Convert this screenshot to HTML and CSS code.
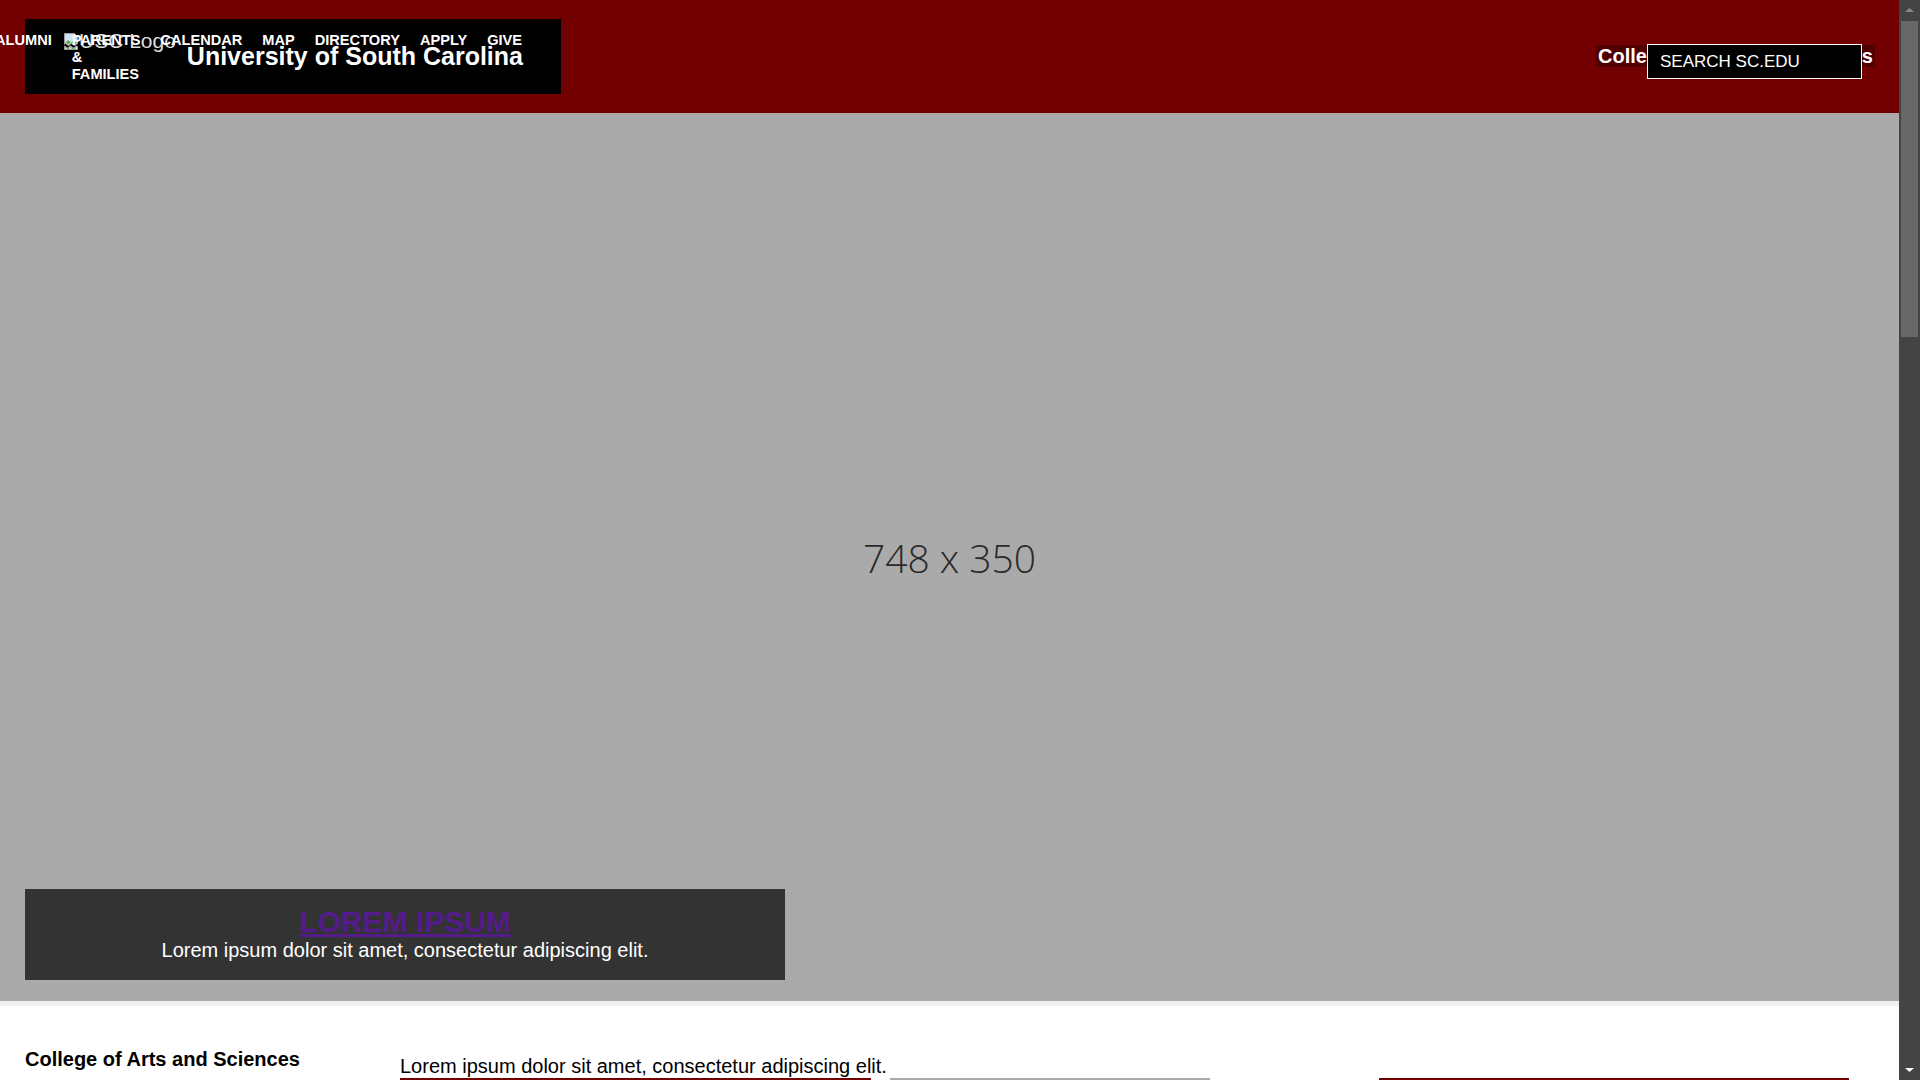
FILE: index.html
```html
<!DOCTYPE html>
<html lang="en">
<head>
<meta charset="utf-8">
<title>College of Arts and Sciences - University of South Carolina</title>
<link rel="stylesheet" href="styles.css">
</head>
<body>
<div class="page">
<header class="site-header">
  <div class="brand">
    <span class="logo">
      <svg class="broken" width="16" height="18" viewBox="0 0 16 18" aria-hidden="true">
        <path d="M1.5 1.5h10l3 3v7l-3 2-3-2-3 2-3-2-1 .8z" fill="#f4f4f4" stroke="#9a9a9a"/>
        <path d="M2 2h9v3h3v6l-2.5 1.6-3-2-3 2-3-2L2 11z" fill="#cfe3f4"/>
        <path d="M2 11l3-3 3 2.5 3-2.5 3 3-2.5 1.6-3-2-3 2-3-2z" fill="#5fae4a"/>
        <path d="M1.5 14l3 2 3-2 3 2 3-2 1 .7v2.8h-13z" fill="#f4f4f4" stroke="#9a9a9a"/>
        <path d="M2.5 15.5l2.5 1.5 2.5-1.5 3 1.5 2.5-1.5" fill="none" stroke="#5fae4a"/>
      </svg>
      <span class="logo-alt">USC Logo</span>
    </span>
    <h1 class="univ">University of South Carolina</h1>
  </div>
  <nav class="top-nav">
    <ul class="top-nav-list">
      <li class="top-nav-item">Alumni</li>
      <li class="top-nav-item wrap">Parents &amp; Families</li>
      <li class="top-nav-item">Calendar</li>
      <li class="top-nav-item">Map</li>
      <li class="top-nav-item">Directory</li>
      <li class="top-nav-item">Apply</li>
      <li class="top-nav-item">Give</li>
    </ul>
  </nav>
  <h2 class="college-title"><span class="college-title-text">College of Arts and Sciences</span></h2>
  <input class="search" type="text" placeholder="SEARCH SC.EDU" aria-label="Search sc.edu">
</header>

<section class="hero">
  <div class="hero-placeholder">748 x 350</div>
  <div class="hero-caption">
    <h2 class="hero-caption-title"><a class="hero-link" href="#">LOREM IPSUM</a></h2>
    <p class="hero-caption-text">Lorem ipsum dolor sit amet, consectetur adipiscing elit.</p>
  </div>
</section>

<main class="content">
  <aside class="sidebar">
    <h2 class="sidebar-title">College of Arts and Sciences</h2>
  </aside>
  <div class="news">
    <div class="news-item first"><span class="news-text">Lorem ipsum dolor sit amet, consectetur adipiscing elit.</span></div>
    <div class="news-item gray"></div>
    <div class="news-item last"></div>
  </div>
</main>

<footer class="site-footer"></footer>
</div>

<div class="scrollbar" aria-hidden="true">
  <svg class="scroll-arrow" width="21" height="17" viewBox="0 0 21 17"><path d="M6 12L10.5 8 15 12z" fill="#8a8a8a"/></svg>
  <div class="scroll-track"><div class="scroll-thumb"></div></div>
  <svg class="scroll-arrow" width="21" height="17" viewBox="0 0 21 17"><path d="M6 5L10.5 9 15 5z" fill="#ffffff"/></svg>
</div>
</body>
</html>
```

FILE: styles.css
```css
html {
  background: #ffffff;
  overflow: hidden;
}

body {
  margin: 0;
  font-family: "Liberation Sans", Arial, sans-serif;
  font-size: 20px;
  color: #000;
}

.page {
  margin-right: 21px;
}

/* Window scrollbar */
.scrollbar {
  position: fixed;
  top: 0;
  right: 0;
  width: 21px;
  height: 100vh;
  background: #444444;
  display: flex;
  flex-direction: column;
}

.scroll-arrow {
  display: block;
  flex: none;
}

.scroll-track {
  flex: 1;
  padding: 4px 2px 0;
}

.scroll-thumb {
  height: 316px;
  background: #686868;
}

/* Header */
.site-header {
  position: relative;
  height: 113px;
  background: #730000;
  display: flex;
  align-items: center;
  justify-content: space-between;
  padding: 0 24px 0 25px;
  box-sizing: border-box;
  color: #fff;
}

.brand {
  width: 536px;
  height: 75px;
  box-sizing: border-box;
  background: #000;
  display: flex;
  align-items: center;
  padding: 0 38px;
}

.logo {
  align-self: flex-start;
  margin-top: 10px;
  display: inline-flex;
  align-items: flex-start;
  font-size: 21px;
  color: #dddddd;
}

.broken {
  margin-top: 3px;
  flex: none;
}

.logo-alt {
  line-height: 24px;
}

.univ {
  margin: 0 0 1px auto;
  font-size: 25px;
  font-weight: bold;
  white-space: nowrap;
}

.top-nav {
  position: absolute;
  left: -5px;
  top: 32px;
}

.top-nav-list {
  list-style: none;
  margin: 0;
  padding: 0;
  display: flex;
  gap: 20px;
  align-items: flex-start;
}

.top-nav-item {
  font-size: 14.6px;
  line-height: 17px;
  font-weight: bold;
  text-transform: uppercase;
  white-space: nowrap;
  color: #fff;
}

.top-nav-item.wrap {
  white-space: normal;
  width: min-content;
}

.college-title {
  margin: 0;
  font-size: 20px;
  line-height: 23px;
  font-weight: bold;
}

.college-title-text {
  background: #500000;
  padding: 0 2px;
}

.search {
  position: absolute;
  right: 37px;
  top: 44px;
  width: 215px;
  height: 35px;
  box-sizing: border-box;
  border: 1px solid #ffffff;
  background: #000;
  color: #fff;
  padding: 0 12px;
  font-family: "Liberation Sans", Arial, sans-serif;
  font-size: 17px;
  outline: none;
}

.search::placeholder {
  color: #fff;
  opacity: 1;
}

/* Hero */
.hero {
  position: relative;
  height: 888px;
  background: #aaaaaa;
  border-bottom: 5px solid #f1f1f1;
  display: flex;
  align-items: center;
  justify-content: center;
}

.hero-placeholder {
  font-family: "Open Sans", "DejaVu Sans", sans-serif;
  font-size: 39px;
  font-weight: 300;
  color: #2a2a2a;
}

.hero-caption {
  position: absolute;
  left: 25px;
  bottom: 21px;
  width: 760px;
  background: #333333;
  color: #fff;
  text-align: center;
  padding: 16px 0 18px;
}

.hero-caption-title {
  margin: 0;
  font-size: 30px;
  font-weight: bold;
  line-height: 34.5px;
}

.hero-link {
  color: #551a8b;
}

.hero-caption-text {
  margin: 0;
  font-size: 20px;
  line-height: 23px;
}

/* Content */
.content {
  display: flex;
  padding: 0 25px;
  min-height: 2000px;
}

.sidebar {
  width: 375px;
  flex: none;
}

.sidebar-title {
  margin: 42px 0 0;
  font-size: 20px;
  line-height: 23px;
  font-weight: bold;
}

.news {
  display: flex;
  align-items: flex-start;
  margin-top: 49px;
}

.news-item {
  height: 23px;
  flex: none;
}

.news-item.first {
  width: 471px;
  border-bottom: 2px solid #730000;
  margin-right: 19px;
}

.news-text {
  white-space: nowrap;
  font-size: 20px;
  line-height: 23px;
}

.news-item.gray {
  width: 320px;
  border-bottom: 2px solid #aaaaaa;
  margin-right: 169px;
}

.news-item.last {
  width: 470px;
  border-bottom: 2px solid #730000;
}

.site-footer {
  height: 470px;
  background: #222222;
}
```
